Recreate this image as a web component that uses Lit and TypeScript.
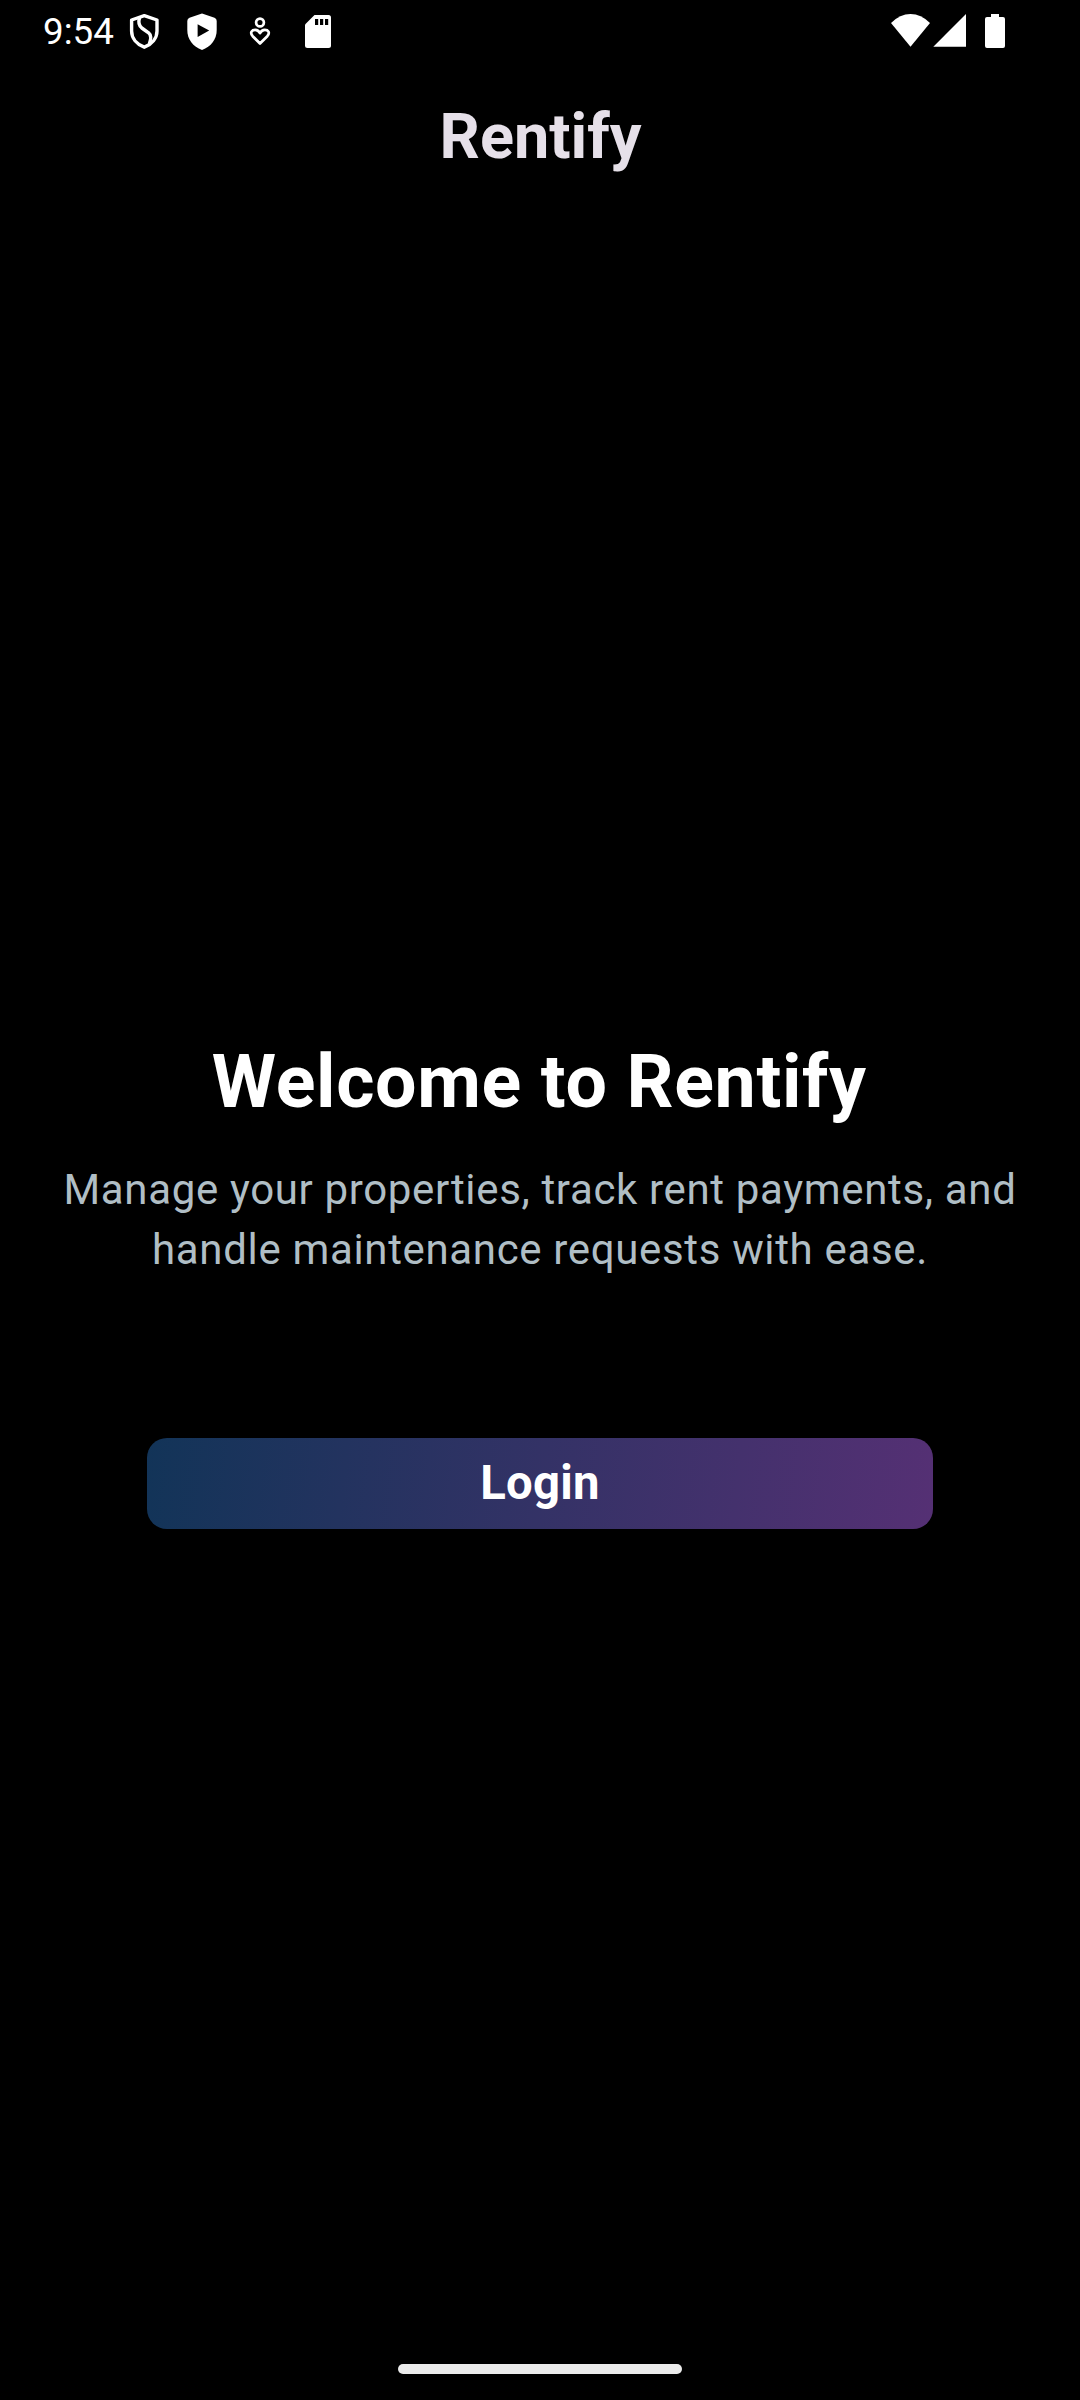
import { LitElement, html, css } from "lit";
import { customElement } from "lit/decorators.js";

@customElement("status-bar")
class StatusBar extends LitElement {
  static styles = css`
    :host { display: flex; align-items: center; height: 63px; box-sizing: border-box; padding: 0 72px 0 43px; color: #fff; }
    .time { font-size: 36.75px; line-height: 43px; width: 73px; white-space: nowrap; }
    .notifications { display: flex; gap: 10px; margin-left: 4px; }
    .system { display: flex; margin-left: auto; }
    svg { display: block; fill: none; }
    .solid { fill: #fff; }
    .hole { fill: #000; }
    .line { stroke: #fff; stroke-width: 3.4; stroke-linejoin: round; }
    .thin { stroke: #fff; stroke-width: 2.7; stroke-linejoin: round; }
  `;
  render() {
    return html`
      <span class="time">9:54</span>
      <div class="notifications">
        <svg width="48" height="63" viewBox="120 0 48 63">
          <path class="line" d="M144.3 15.700L157 20V31C157 38 152 44.200 144.300 47.200C136.600 44.200 131.600 38 131.600 31V20Z" />
          <path class="line" d="M139.600 17.500C138.200 22 138.700 25.500 141.800 28L148.600 32.800C151.600 35.300 151.200 39 149.300 44" />
        </svg>
        <svg width="48" height="63" viewBox="178 0 48 63">
          <path class="solid" d="M202 13.500L214.500 17.800Q216.700 18.600 216.700 21V30C216.700 39.500 211 46.500 202 50C193 46.500 187.300 39.500 187.300 30V21Q187.300 18.600 189.500 17.800Z" />
          <path class="hole" d="M197.600 24.200V37L209.200 30.600Z" />
        </svg>
        <svg width="48" height="63" viewBox="236 0 48 63">
          <circle class="thin" cx="260" cy="22.500" r="3.900" />
          <path class="thin" d="M260 43.500L252.700 36.200C249.500 32.500 252 29.900 255.200 29.900C257.500 29.900 259 31.200 260 33.200C261 31.200 262.500 29.900 264.800 29.900C268 29.900 270.500 32.500 267.300 36.200Z" />
        </svg>
        <svg width="48" height="63" viewBox="294 0 48 63">
          <path class="solid" d="M314.500 15H328.500Q331 15 331 17.500V45.500Q331 48 328.500 48H307.500Q305 48 305 45.500V24.500Z" />
          <path class="hole" d="M315 19h3.200v6H315zM320 19h3.200v6H320zM325 19h3.200v6H325z" />
        </svg>
      </div>
      <svg class="system" width="120" height="63" viewBox="888 0 120 63">
        <path class="solid" d="M891 23Q900 14 910.500 14T930 23L910.500 46.700Z" />
        <path class="solid" d="M966 14V46.700H933.300Z" />
        <path class="solid" d="M991 14H999V17H1003Q1005 17 1005 19V46Q1005 48 1003 48H987Q985 48 985 46V19Q985 17 987 17H991Z" />
      </svg>
    `;
  }
}

@customElement("app-root")
class AppRoot extends LitElement {
  static styles = css`
    :host { display: flex; flex-direction: column; width: 1080px; height: 2400px; background: #000; font-family: Roboto, "Liberation Sans", sans-serif; overflow: hidden; }
    .app-bar { height: 147px; display: flex; align-items: center; justify-content: center; padding-left: 1px; color: #e6e0e9; font-size: 63px; font-weight: 700; }
    .content { flex: 1; display: flex; flex-direction: column; align-items: center; padding-top: 829px; text-align: center; }
    .heading { margin: 0; padding-right: 1.500px; font-size: 73.5px; line-height: 86px; font-weight: 700; letter-spacing: 0.656px; color: #fff; }
    .summary { margin: 35px 0 158px; font-size: 42px; line-height: 60px; letter-spacing: 0.656px; color: #b0bec5; }
    .login { width: 786px; height: 91px; padding: 0; border: 0; border-radius: 20px; background: linear-gradient(96.6deg, #123458, #553074); color: #fff; font: 700 47.25px/55px Roboto, "Liberation Sans", sans-serif; letter-spacing: 0.2625px; }
    .navigation { height: 63px; display: flex; align-items: center; justify-content: center; }
    .handle { width: 284px; height: 10px; border-radius: 5px; background: #ebebeb; }
  `;
  render() {
    return html`
      <status-bar></status-bar>
      <header class="app-bar">Rentify</header>
      <main class="content">
        <h1 class="heading">Welcome to Rentify</h1>
        <p class="summary">Manage your properties, track rent payments, and<br />handle maintenance requests with ease.</p>
        <button class="login">Login</button>
      </main>
      <footer class="navigation"><div class="handle"></div></footer>
    `;
  }
}
